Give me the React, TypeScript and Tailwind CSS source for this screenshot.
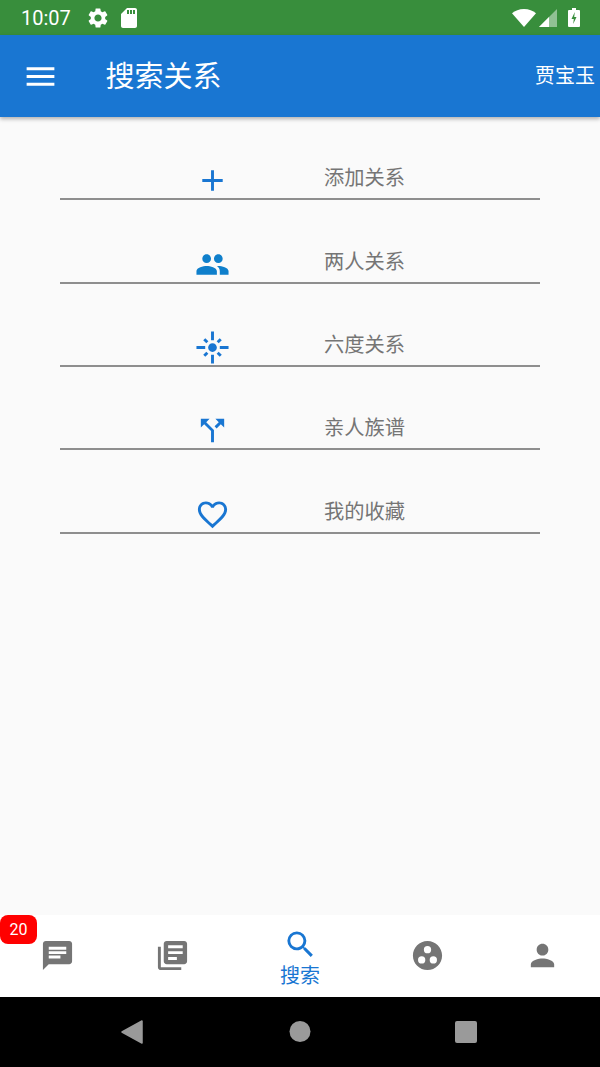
import React from 'react';
import {
  MdAdd,
  MdPeople,
  MdFlare,
  MdCallSplit,
  MdFavoriteBorder,
  MdMenu,
  MdSettings,
  MdSdCard,
  MdChat,
  MdLibraryBooks,
  MdSearch,
  MdGroupWork,
  MdPerson,
} from 'react-icons/md';

const FONT = "font-['Roboto','Noto_Sans_CJK_SC',sans-serif]";

const rows = [
  { icon: MdAdd, label: '添加关系' },
  { icon: MdPeople, label: '两人关系', tone: 'text-[#0f7fcb]' },
  { icon: MdFlare, label: '六度关系' },
  { icon: MdCallSplit, label: '亲人族谱' },
  { icon: MdFavoriteBorder, label: '我的收藏' },
];

const StatusBar = () => (
  <div className="h-[35px] shrink-0 bg-[#388e3c] flex items-center text-white">
    <span className="ml-[21px] w-[51px] text-[20px] leading-none">10:07</span>
    <MdSettings size={24} className="ml-[14px]" />
    <MdSdCard size={24} className="ml-[7px]" />
    <div className="ml-auto flex items-center">
      <svg width="24" height="18" viewBox="0 0 24 18">
        <path d="M12 18 0 4.2C3 1.7 7.2 0 12 0s9 1.700 12 4.200z" fill="#fff" />
      </svg>
      <svg width="18" height="18" viewBox="0 0 18 18" className="ml-[3px]">
        <path d="M18 0v18H0z" fill="#fff" fillOpacity="0.45" />
        <path d="M10 8v10H0z" fill="#fff" />
      </svg>
      <svg width="12" height="19" viewBox="0 0 12 19" className="ml-[11px] mr-[20px]">
        <path d="M4 0h4v2h3a1 1 0 0 1 1 1v15a1 1 0 0 1-1 1H1a1 1 0 0 1-1-1V3a1 1 0 0 1 1-1h3z" fill="#fff" />
        <path d="M6.800 4 3.500 11h2.300l-.6 5 3.300-7H6.200z" fill="#388e3c" />
      </svg>
    </div>
  </div>
);

const Header = () => (
  <div className="relative z-10 h-[82px] shrink-0 bg-[#1976d2] flex items-center text-white shadow-[0_2px_4px_rgba(0,0,0,0.3)]">
    <MdMenu size={37} className="ml-[22px]" />
    <span className="ml-[46.500px] mt-[3px] text-[29px] leading-none">搜索关系</span>
    <span className="ml-auto mr-[5px] text-[20px] leading-none">贾宝玉</span>
  </div>
);

const NavItem: React.FC<{ icon: React.ElementType; label?: string }> = ({ icon: Icon, label }) =>
  label ? (
    <div className="w-[140px] flex flex-col items-center text-[#1976d2] pt-[12px]">
      <Icon size={35} />
      <span className="text-[20px] leading-[24px] mt-[2px]">{label}</span>
    </div>
  ) : (
    <div className="w-[115px] flex justify-center text-[#757575] pt-[23px]">
      <Icon size={35} />
    </div>
  );

export default function App() {
  return (
    <div className={`${FONT} w-[600px] h-[1067px] flex flex-col overflow-hidden bg-[#fafafa]`}>
      <StatusBar />
      <Header />

      <div className="flex-1 flex flex-col px-[60px]">
        {rows.map((row, i) => {
          const Icon = row.icon;
          return (
            <div key={i} className="h-[83.330px] shrink-0 flex items-end border-b-2 border-[#8e8e8e]">
              <div className={`w-[264px] pl-[40px] flex justify-center ${row.tone ?? 'text-[#1976d2]'}`}>
                <Icon size={35} />
              </div>
              <span className="text-[20.250px] leading-[24px] mb-[8px] text-[#757575]">{row.label}</span>
            </div>
          );
        })}
      </div>

      <div className="relative h-[82px] shrink-0 bg-white flex">
        <NavItem icon={MdChat} />
        <NavItem icon={MdLibraryBooks} />
        <NavItem icon={MdSearch} label="搜索" />
        <NavItem icon={MdGroupWork} />
        <NavItem icon={MdPerson} />
        <span className="absolute left-0 top-0 w-[37px] h-[29px] rounded-[8px] bg-[#ff0000] text-white text-[16px] flex items-center justify-center">
          20
        </span>
      </div>

      <div className="h-[70px] shrink-0 bg-black grid grid-cols-3 px-[48px] items-center">
        <div className="flex justify-center">
          <svg width="22" height="24" viewBox="0 0 22 24">
            <path d="M21 1v22L1 12z" fill="#9a9a9a" stroke="#9a9a9a" strokeWidth="1.500" strokeLinejoin="round" />
          </svg>
        </div>
        <div className="flex justify-center">
          <div className="w-[21px] h-[21px] rounded-full bg-[#9a9a9a] translate-x-[-0.500px] translate-y-[-1px]" />
        </div>
        <div className="flex justify-center">
          <div className="w-[22px] h-[22px] rounded-[2px] bg-[#9a9a9a] translate-x-[-2px]" />
        </div>
      </div>
    </div>
  );
}
